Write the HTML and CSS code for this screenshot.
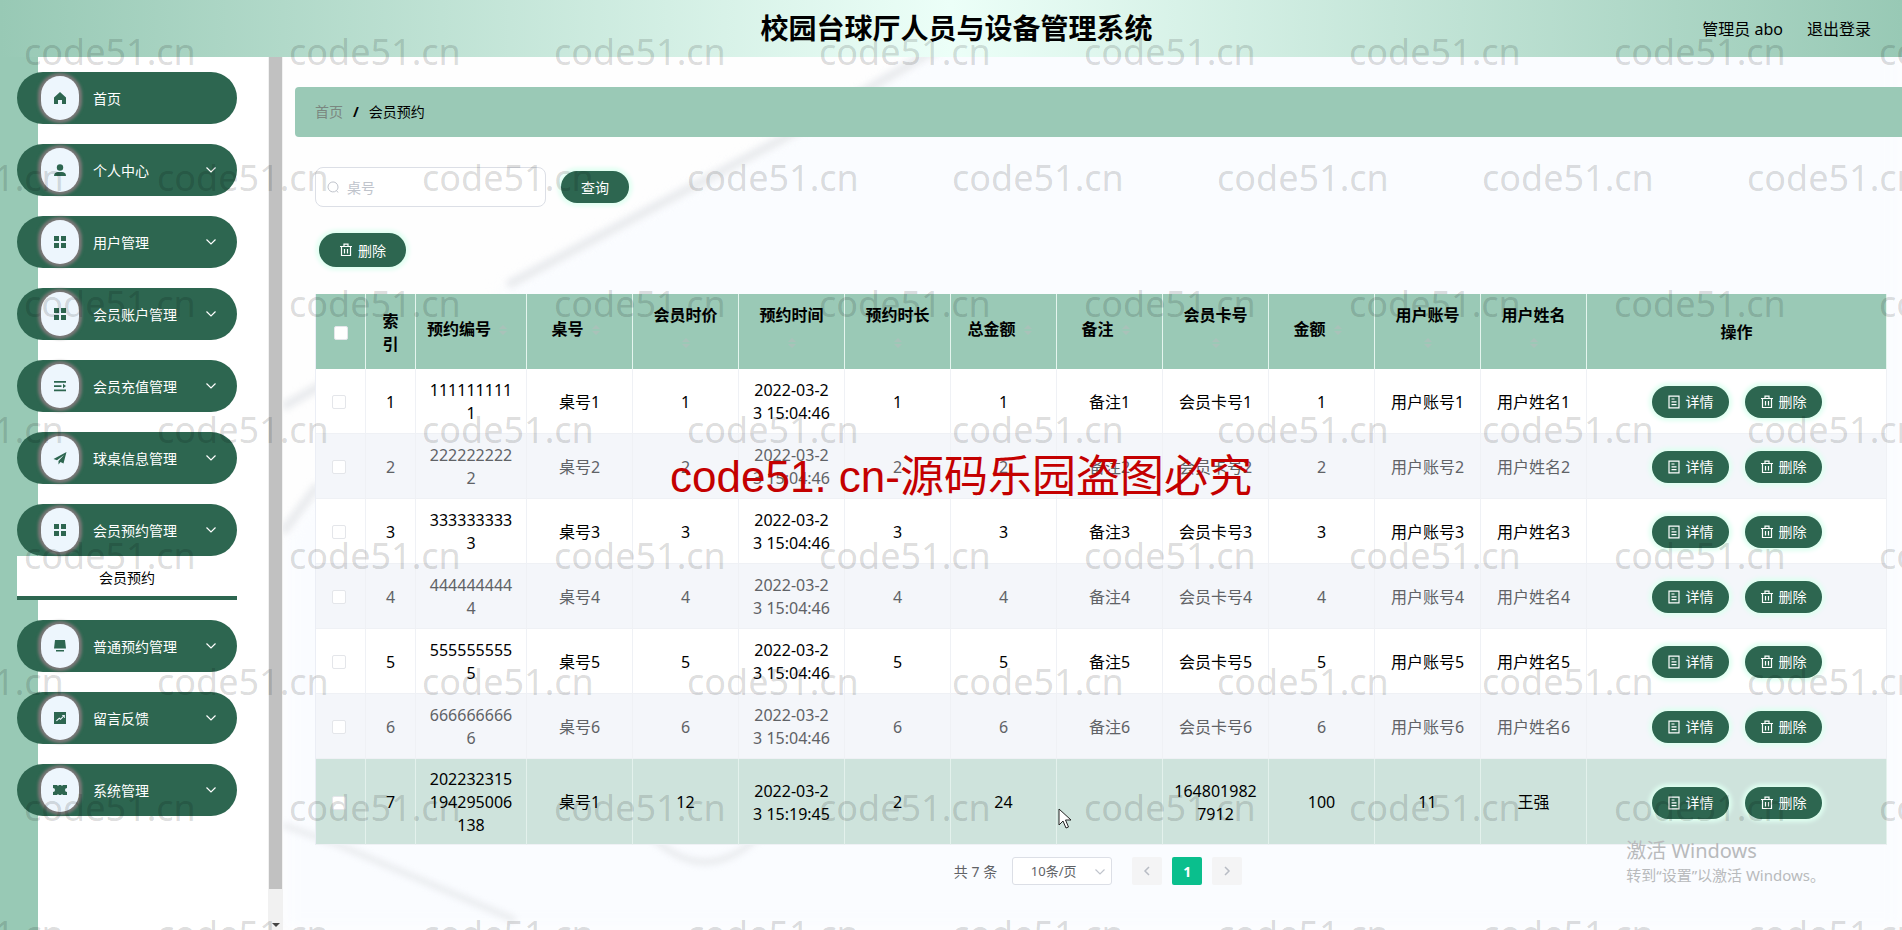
FILE: index.html
```html
<!DOCTYPE html>
<html lang="zh-CN">
<head>
<meta charset="utf-8">
<title>校园台球厅人员与设备管理系统</title>
<link rel="stylesheet" href="styles.css">
</head>
<body>
<svg class="sprite" aria-hidden="true">
  <symbol id="i-home" viewBox="0 0 14 14"><path d="M7 1 1 6.500V13h4V9h4v4h4V6.500z"/></symbol>
  <symbol id="i-user" viewBox="0 0 14 14"><circle cx="7" cy="4.500" r="3.200"/><path d="M1 13c0-3 2-4 4-4h4c2 0 4 1 4 4z"/></symbol>
  <symbol id="i-grid" viewBox="0 0 14 14"><path d="M1 1h5v5H1zM8 1h5v5H8zM1 8h5v5H1zM8 8h5v5H8z"/></symbol>
  <symbol id="i-list" viewBox="0 0 14 14"><path d="M1 2h12v1.700H1zM1 6.200h7.500v1.700H1zM1 10.500h12v1.700H1zM10 4.800 13 7l-3 2.200z"/></symbol>
  <symbol id="i-send" viewBox="0 0 14 14"><path d="M13.500 1 0.500 8l3.500 1.300L11 4 5.500 10v3.500L7.500 11l3 1.500z"/></symbol>
  <symbol id="i-desk" viewBox="0 0 14 14"><path d="M2 1h10l1 8.500H1zM3 11h8v1.600H3z"/></symbol>
  <symbol id="i-chart" viewBox="0 0 14 14"><path fill-rule="evenodd" d="M1 1h12v12H1zM3 9.500l.8.800L6.300 8l1.200 1L11 5.500V7h.8V4H9v.8h1.300L7.500 7.600 6.300 6.600z"/></symbol>
  <symbol id="i-ticket" viewBox="0 0 14 14"><path d="M0 2h4l1 1 1-1h2l1 1 1-1h4v3a2 2 0 0 0 0 4v3h-4l-1-1-1 1H6l-1-1-1 1H0V9a2 2 0 0 0 0-4z"/></symbol>
  <symbol id="i-down" viewBox="0 0 12 12"><path d="M1.500 3.500 6 8l4.500-4.500" fill="none" stroke="currentColor" stroke-width="1.200"/></symbol>
  <symbol id="i-left" viewBox="0 0 12 12"><path d="M8 2 4 6l4 4" fill="none" stroke="currentColor" stroke-width="1.500"/></symbol>
  <symbol id="i-right" viewBox="0 0 12 12"><path d="m4 2 4 4-4 4" fill="none" stroke="currentColor" stroke-width="1.500"/></symbol>
  <symbol id="i-search" viewBox="0 0 14 14"><path d="M10.500 10.500A5 5 0 1 1 12 7c0 1.500-.6 2.700-1.500 3.500L12 12.500" fill="none" stroke="currentColor"/></symbol>
  <symbol id="i-trash" viewBox="0 0 14 14"><path d="M1 3.500h12M5 3V1.200h4V3M2.500 3.500v9h9v-9M5.500 6v4.500M8.500 6v4.500" fill="none" stroke="currentColor" stroke-width="1.200"/></symbol>
  <symbol id="i-doc" viewBox="0 0 14 14"><path d="M2 1.200h10v11.600H2zM4.500 4h3M4.500 6.800h5M4.500 9.600h5" fill="none" stroke="currentColor" stroke-width="1.200"/></symbol>
  <symbol id="i-sort" viewBox="0 0 10 14"><path d="M5 2 9 6H1zM1 8h8l-4 4z"/></symbol>
</svg>

<header class="topbar">
  <h1 class="title">校园台球厅人员与设备管理系统</h1>
  <div class="account"><span>管理员 abo</span><a href="#">退出登录</a></div>
</header>

<div class="body">
  <aside class="sidebar">
    <nav class="menu">
      <a class="item" href="#"><span class="dot"><svg><use href="#i-home"/></svg></span><span class="label">首页</span></a>
      <a class="item" href="#"><span class="dot"><svg><use href="#i-user"/></svg></span><span class="label">个人中心</span><svg class="arrow"><use href="#i-down"/></svg></a>
      <a class="item" href="#"><span class="dot"><svg><use href="#i-grid"/></svg></span><span class="label">用户管理</span><svg class="arrow"><use href="#i-down"/></svg></a>
      <a class="item" href="#"><span class="dot"><svg><use href="#i-grid"/></svg></span><span class="label">会员账户管理</span><svg class="arrow"><use href="#i-down"/></svg></a>
      <a class="item" href="#"><span class="dot"><svg><use href="#i-list"/></svg></span><span class="label">会员充值管理</span><svg class="arrow"><use href="#i-down"/></svg></a>
      <a class="item" href="#"><span class="dot"><svg><use href="#i-send"/></svg></span><span class="label">球桌信息管理</span><svg class="arrow"><use href="#i-down"/></svg></a>
      <div class="group">
        <a class="item" href="#"><span class="dot"><svg><use href="#i-grid"/></svg></span><span class="label">会员预约管理</span><svg class="arrow"><use href="#i-down"/></svg></a>
        <a class="sub" href="#">会员预约</a>
      </div>
      <a class="item" href="#"><span class="dot"><svg><use href="#i-desk"/></svg></span><span class="label">普通预约管理</span><svg class="arrow"><use href="#i-down"/></svg></a>
      <a class="item" href="#"><span class="dot"><svg><use href="#i-chart"/></svg></span><span class="label">留言反馈</span><svg class="arrow"><use href="#i-down"/></svg></a>
      <a class="item" href="#"><span class="dot"><svg><use href="#i-ticket"/></svg></span><span class="label">系统管理</span><svg class="arrow"><use href="#i-down"/></svg></a>
    </nav>
    <div class="scrollbar"><div class="thumb"></div><div class="scroll-end"></div></div>
  </aside>

  <main class="main">
    <svg class="streaks" viewBox="0 0 1619 873" preserveAspectRatio="xMinYMin slice" aria-hidden="true">
      <path class="tint" d="M674-20 503 80 225 228 0 480v393h1619V-20z"/>
      <g class="lines">
        <path d="M674-20 503 80 225 228"/>
        <path d="M0 350 40 327M0 475 35 428"/>
        <path class="thin" d="M0 768 56 788 232 863"/>
        <path class="thin" d="M367 778q55 54 110 0"/>
      </g>
    </svg>
    <nav class="crumbs"><a href="#">首页</a><b>/</b><span>会员预约</span></nav>
    <div class="content">
      <form class="search">
        <label class="field"><svg><use href="#i-search"/></svg><input type="text" placeholder="桌号" aria-label="桌号"></label>
        <button class="btn query" type="button">查询</button>
      </form>
      <div class="actions"><button class="btn big" type="button"><svg><use href="#i-trash"/></svg>删除</button></div>

      <table class="grid">
        <colgroup><col class="c-s"><col class="c-s"><col class="c-no"><col><col><col><col><col><col><col><col><col><col><col class="c-op"></colgroup>
        <thead><tr>
          <th class="mid"><input type="checkbox" aria-label="全选"></th>
          <th class="mid idx">索引</th>
          <th>预约编号<svg><use href="#i-sort"/></svg></th>
          <th>桌号<svg><use href="#i-sort"/></svg></th>
          <th>会员时价<svg><use href="#i-sort"/></svg></th>
          <th>预约时间<svg><use href="#i-sort"/></svg></th>
          <th>预约时长<svg><use href="#i-sort"/></svg></th>
          <th>总金额<svg><use href="#i-sort"/></svg></th>
          <th>备注<svg><use href="#i-sort"/></svg></th>
          <th>会员卡号<svg><use href="#i-sort"/></svg></th>
          <th>金额<svg><use href="#i-sort"/></svg></th>
          <th>用户账号<svg><use href="#i-sort"/></svg></th>
          <th>用户姓名<svg><use href="#i-sort"/></svg></th>
          <th class="mid">操作</th>
        </tr></thead>
        <tbody>
          <tr><td><input type="checkbox" aria-label="选择 1"></td><td>1</td><td>1111111111</td><td>桌号1</td><td>1</td><td>2022-03-23 15:04:46</td><td>1</td><td>1</td><td>备注1</td><td>会员卡号1</td><td>1</td><td>用户账号1</td><td>用户姓名1</td><td><div class="ops"><button class="btn" type="button"><svg><use href="#i-doc"/></svg>详情</button><button class="btn" type="button"><svg><use href="#i-trash"/></svg>删除</button></div></td></tr>
          <tr><td><input type="checkbox" aria-label="选择 2"></td><td>2</td><td>2222222222</td><td>桌号2</td><td>2</td><td>2022-03-23 15:04:46</td><td>2</td><td>2</td><td>备注2</td><td>会员卡号2</td><td>2</td><td>用户账号2</td><td>用户姓名2</td><td><div class="ops"><button class="btn" type="button"><svg><use href="#i-doc"/></svg>详情</button><button class="btn" type="button"><svg><use href="#i-trash"/></svg>删除</button></div></td></tr>
          <tr><td><input type="checkbox" aria-label="选择 3"></td><td>3</td><td>3333333333</td><td>桌号3</td><td>3</td><td>2022-03-23 15:04:46</td><td>3</td><td>3</td><td>备注3</td><td>会员卡号3</td><td>3</td><td>用户账号3</td><td>用户姓名3</td><td><div class="ops"><button class="btn" type="button"><svg><use href="#i-doc"/></svg>详情</button><button class="btn" type="button"><svg><use href="#i-trash"/></svg>删除</button></div></td></tr>
          <tr><td><input type="checkbox" aria-label="选择 4"></td><td>4</td><td>4444444444</td><td>桌号4</td><td>4</td><td>2022-03-23 15:04:46</td><td>4</td><td>4</td><td>备注4</td><td>会员卡号4</td><td>4</td><td>用户账号4</td><td>用户姓名4</td><td><div class="ops"><button class="btn" type="button"><svg><use href="#i-doc"/></svg>详情</button><button class="btn" type="button"><svg><use href="#i-trash"/></svg>删除</button></div></td></tr>
          <tr><td><input type="checkbox" aria-label="选择 5"></td><td>5</td><td>5555555555</td><td>桌号5</td><td>5</td><td>2022-03-23 15:04:46</td><td>5</td><td>5</td><td>备注5</td><td>会员卡号5</td><td>5</td><td>用户账号5</td><td>用户姓名5</td><td><div class="ops"><button class="btn" type="button"><svg><use href="#i-doc"/></svg>详情</button><button class="btn" type="button"><svg><use href="#i-trash"/></svg>删除</button></div></td></tr>
          <tr><td><input type="checkbox" aria-label="选择 6"></td><td>6</td><td>6666666666</td><td>桌号6</td><td>6</td><td>2022-03-23 15:04:46</td><td>6</td><td>6</td><td>备注6</td><td>会员卡号6</td><td>6</td><td>用户账号6</td><td>用户姓名6</td><td><div class="ops"><button class="btn" type="button"><svg><use href="#i-doc"/></svg>详情</button><button class="btn" type="button"><svg><use href="#i-trash"/></svg>删除</button></div></td></tr>
          <tr class="active"><td><input type="checkbox" aria-label="选择 7"></td><td>7</td><td>202232315194295006138</td><td>桌号1</td><td>12</td><td>2022-03-23 15:19:45</td><td>2</td><td>24</td><td></td><td>1648019827912</td><td>100</td><td>11</td><td>王强</td><td><div class="ops"><button class="btn" type="button"><svg><use href="#i-doc"/></svg>详情</button><button class="btn" type="button"><svg><use href="#i-trash"/></svg>删除</button></div></td></tr>
        </tbody>
      </table>

      <div class="pager">
        <span>共 7 条</span>
        <span class="size"><select aria-label="每页条数"><option>10条/页</option></select><svg><use href="#i-down"/></svg></span>
        <div class="pages">
          <button type="button" aria-label="上一页"><svg><use href="#i-left"/></svg></button>
          <button type="button" class="current">1</button>
          <button type="button" aria-label="下一页"><svg><use href="#i-right"/></svg></button>
        </div>
      </div>
    </div>
  </main>
</div>

<div class="marks">
  <div class="row"><span>code51.cn</span><span>code51.cn</span><span>code51.cn</span><span>code51.cn</span><span>code51.cn</span><span>code51.cn</span><span>code51.cn</span><span>code51.cn</span></div>
  <div class="row alt"><span>code51.cn</span><span>code51.cn</span><span>code51.cn</span><span>code51.cn</span><span>code51.cn</span><span>code51.cn</span><span>code51.cn</span><span>code51.cn</span></div>
  <div class="row"><span>code51.cn</span><span>code51.cn</span><span>code51.cn</span><span>code51.cn</span><span>code51.cn</span><span>code51.cn</span><span>code51.cn</span><span>code51.cn</span></div>
  <div class="row alt"><span>code51.cn</span><span>code51.cn</span><span>code51.cn</span><span>code51.cn</span><span>code51.cn</span><span>code51.cn</span><span>code51.cn</span><span>code51.cn</span></div>
  <div class="row"><span>code51.cn</span><span>code51.cn</span><span>code51.cn</span><span>code51.cn</span><span>code51.cn</span><span>code51.cn</span><span>code51.cn</span><span>code51.cn</span></div>
  <div class="row alt"><span>code51.cn</span><span>code51.cn</span><span>code51.cn</span><span>code51.cn</span><span>code51.cn</span><span>code51.cn</span><span>code51.cn</span><span>code51.cn</span></div>
  <div class="row"><span>code51.cn</span><span>code51.cn</span><span>code51.cn</span><span>code51.cn</span><span>code51.cn</span><span>code51.cn</span><span>code51.cn</span><span>code51.cn</span></div>
  <div class="row alt"><span>code51.cn</span><span>code51.cn</span><span>code51.cn</span><span>code51.cn</span><span>code51.cn</span><span>code51.cn</span><span>code51.cn</span><span>code51.cn</span></div>
</div>
<div class="notice">code51. cn-源码乐园盗图必究</div>
<div class="activate"><div class="big-line">激活 Windows</div><div>转到“设置”以激活 Windows。</div></div>
<svg class="cursor" viewBox="0 0 14 22" aria-hidden="true"><path d="M1 1v16l4-4 3 7 2.500-1-3-7H13z" fill="#fff" stroke="#222"/></svg>
</body>
</html>
```
FILE: styles.css
```css
* { box-sizing: border-box; }
body {
  margin: 0;
  position: relative;
  min-height: 100vh;
  display: flex;
  flex-direction: column;
  font-family: "Noto Sans", "Noto Sans CJK SC", sans-serif;
  font-size: 14px;
  color: #000;
  background: #fff;
}
a { color: inherit; text-decoration: none; }
button, input, select { font: inherit; }
svg { fill: currentColor; }
.sprite { display: none; }

.topbar {
  height: 57px;
  display: grid;
  grid-template-columns: 1fr auto 1fr;
  align-items: center;
  padding: 0 31px 2px 42px;
  background: linear-gradient(90deg, #98c9b5, #ecfff8 50%, #98c9b5);
}
.title { grid-column: 2; margin: 0; font-size: 28px; line-height: 36px; font-weight: 700; }
.account { display: flex; justify-content: flex-end; gap: 24px; font-size: 16px; }

.body { flex: 1; display: flex; }
.sidebar {
  width: 283px;
  flex: none;
  display: flex;
  justify-content: space-between;
  background: linear-gradient(90deg, #98c9b5 38px, #fff 38px);
}
.menu { width: 237px; padding: 15px 0 0 17px; display: flex; flex-direction: column; gap: 20px; }
.item {
  height: 52px;
  display: flex;
  align-items: center;
  padding: 0 20px 0 24px;
  border-radius: 26px;
  background: #2d6650;
  color: #fff;
}
.dot {
  width: 38px;
  height: 44px;
  border-radius: 20px;
  display: grid;
  place-items: center;
  background: #edf6fd;
  color: #2d6650;
  box-shadow: 0 0 3px 3px #7c7878;
}
.dot svg { width: 14px; height: 14px; }
.label { flex: 1; padding-left: 14px; }
.arrow { width: 12px; height: 12px; }
.sub {
  display: block;
  height: 44px;
  line-height: 44px;
  padding: 0 38px;
  text-align: center;
  background: #fff;
  border-bottom: 4px solid #2d6650;
}
.scrollbar { width: 15px; display: flex; flex-direction: column; background: #f1f1f1; }
.thumb { flex: 1; margin: 0 1px; background: #c1c1c1; }
.scroll-end { height: 41px; display: flex; align-items: flex-end; justify-content: center; padding-bottom: 3px; }
.scroll-end::after { content: ""; border: 4px solid transparent; border-top-color: #444; border-bottom: 0; }

.main { flex: 1; min-width: 0; position: relative; padding: 30px 0 0 12px; background: #fefefe; }
.streaks { position: absolute; inset: 0; width: 100%; height: 100%; }
.tint { fill: #fafcff; filter: blur(8px); }
.lines { fill: none; stroke: #e9ebee; stroke-width: 9; filter: blur(3px); }
.thin { stroke-width: 6; }
.crumbs {
  position: relative;
  height: 50px;
  display: flex;
  align-items: center;
  gap: 10px;
  padding: 0 0 2px 20px;
  border-radius: 4px 0 0 4px;
  background: #9ac9b6;
}
.crumbs a { color: #7a8780; }
.content { position: relative; padding: 30px 15px 0 20px; }
.search { display: flex; align-items: center; gap: 15px; }
.field {
  width: 231px;
  height: 40px;
  display: flex;
  align-items: center;
  gap: 7px;
  padding: 0 10px;
  border: 1px solid #dcdfe6;
  border-radius: 8px;
  background: #fff;
  color: #c0c4cc;
}
.field svg { width: 14px; height: 14px; flex: none; }
.field input { width: 100%; min-width: 0; border: 0; padding: 0; outline: 0; background: none; }
.field input::placeholder { color: #c0c4cc; }
.btn {
  height: 32px;
  display: flex;
  align-items: center;
  gap: 5px;
  padding: 0 15px;
  border: 0;
  border-radius: 16px;
  background: #2d6650;
  color: #fff;
  box-shadow: 0 0 4px 3px #dffff1;
}
.btn svg { width: 14px; height: 14px; }
.query { padding: 0 20px; }
.actions { padding: 26px 4px 27px; }
.big { height: 34px; border-radius: 17px; padding: 0 20px; }

.grid {
  width: 100%;
  table-layout: fixed;
  border-collapse: separate;
  border-spacing: 0;
  font-size: 16px;
  line-height: 23px;
  text-align: center;
  border-left: 1px solid #ebeef5;
}
.c-s { width: 50px; }
.c-no { width: 111px; }
.c-op { width: 300px; }
.grid th {
  height: 75px;
  padding: 0 10px 5px;
  line-height: 27px;
  font-weight: 700;
  background: #9ac9b6;
  border-right: 1px solid #e4f5ee;
}
.grid th.mid { padding: 2px 10px 0; line-height: 23px; }
.grid th.idx { padding: 2px 16px 0; }
.grid th svg { width: 10px; height: 14px; margin: 0 7px; color: #a9c2b9; vertical-align: -2px; }
.grid td {
  height: 65px;
  padding: 9px 11px 7px;
  word-break: break-all;
  background: #fff;
  border-right: 1px solid #eff1f5;
  border-bottom: 1px solid #eff1f5;
}
.grid tr:nth-child(even) td { background: #f4f6fa; color: #606266; }
.grid .active td { background: #cee3dc; border-right-color: #e3f1ec; }
.grid td:first-child { padding-right: 14px; }
.grid input {
  appearance: none;
  display: block;
  width: 14px;
  height: 14px;
  margin: 0 auto;
  border: 1px solid #e4e6ea;
  border-radius: 2px;
  background: #fff;
}
.ops { display: flex; justify-content: center; gap: 16px; font-size: 14px; line-height: 20px; }

.pager { display: flex; justify-content: center; align-items: center; padding: 12px 6px 0 0; color: #606266; }
.size { position: relative; margin: 0 20px 0 15px; }
.size select {
  appearance: none;
  display: block;
  width: 100px;
  height: 28px;
  padding: 0 17px 0 0;
  border: 1px solid #dcdfe6;
  border-radius: 3px;
  background: #fff;
  color: #606266;
  font-size: 13px;
  text-align: center;
  text-align-last: center;
}
.size svg { position: absolute; right: 6px; top: 9px; width: 12px; height: 12px; color: #c0c4cc; pointer-events: none; }
.pages { display: flex; gap: 10px; }
.pages button {
  width: 30px;
  height: 28px;
  display: grid;
  place-items: center;
  padding: 0;
  border: 0;
  border-radius: 2px;
  background: #f4f4f5;
  color: #b8bcc4;
}
.pages svg { width: 12px; height: 12px; }
.pages .current { background: #0abf8d; color: #fff; font-weight: 700; }

.marks { position: absolute; inset: 0; padding: 28px 0 0 24px; overflow: hidden; pointer-events: none; }
.row { display: flex; height: 126px; font-size: 36px; line-height: 48px; color: rgba(0, 0, 0, .15); }
.row span { flex: none; width: 265px; }
.alt { margin-left: -132px; }
.notice {
  position: absolute;
  top: 50%;
  left: 0;
  right: 0;
  margin-top: -20px;
  padding-left: 20px;
  text-align: center;
  font-family: "Liberation Sans", "Noto Sans CJK SC", sans-serif;
  font-size: 44px;
  line-height: 64px;
  color: #c40000;
  pointer-events: none;
}
.activate { position: absolute; right: 77px; bottom: 43px; font-size: 15px; line-height: 23px; color: #b8babc; pointer-events: none; }
.big-line { font-size: 20px; line-height: 26px; }
.cursor { position: absolute; left: 1058px; top: 808px; width: 14px; height: 22px; }
```
